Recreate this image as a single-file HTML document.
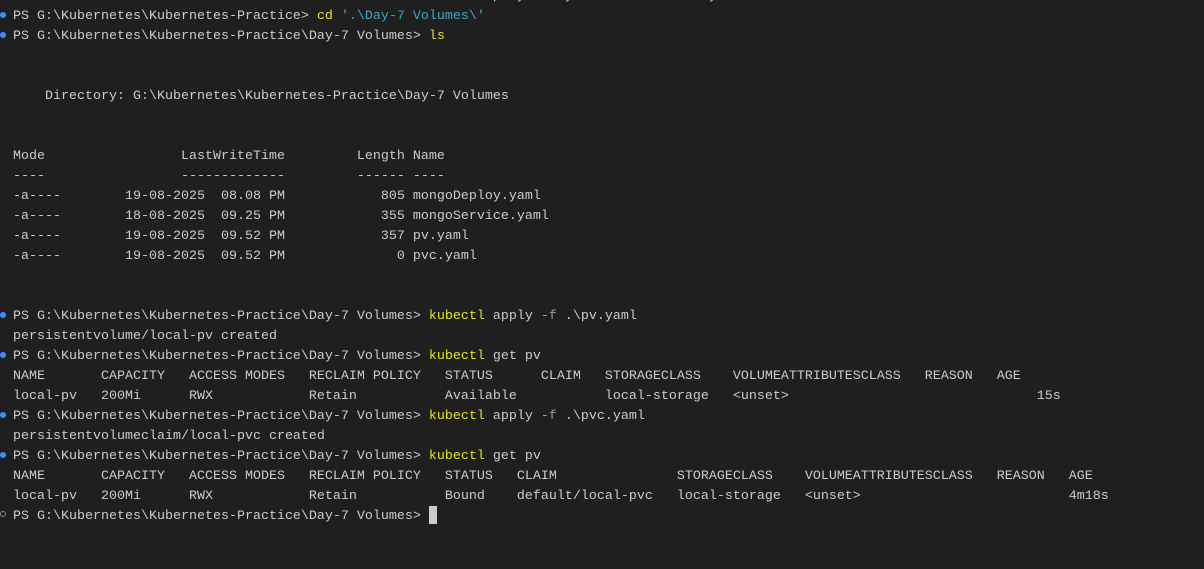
<!DOCTYPE html>
<html><head><meta charset="utf-8"><style>
html,body{margin:0;padding:0;background:#1f1f1f;width:1204px;height:569px;overflow:hidden}
.r{position:absolute;left:13px;height:20px;line-height:20px;font-family:"Liberation Mono",monospace;font-size:13.33px;color:#cccccc;white-space:pre}
.y{color:#e5e510}.s{color:#3fa7c9}.g{color:#999}
.d{position:absolute;left:0;width:6px;height:6px;border-radius:50%;background:#3794ff}
.h{position:absolute;left:0;width:4px;height:4px;border-radius:50%;border:1px solid #8a8a8a}
.cur{position:absolute;left:429px;top:506px;width:8px;height:18px;background:#cccccc}
</style></head><body>
<div class="r" style="top:-13px">PS G:\Kubernetes\Kubernetes-Practice&gt; kubectl delete -f .\deployment.yaml -f .\service.yaml</div>
<div class="d" style="top:12px"></div><div class="r" style="top:7px">PS G:\Kubernetes\Kubernetes-Practice&gt; <span class="y">cd</span> <span class="s">'.\Day-7 Volumes\'</span></div>
<div class="d" style="top:32px"></div><div class="r" style="top:27px">PS G:\Kubernetes\Kubernetes-Practice\Day-7 Volumes&gt; <span class="y">ls</span></div>
<div class="r" style="top:87px">    Directory: G:\Kubernetes\Kubernetes-Practice\Day-7 Volumes</div>
<div class="r" style="top:147px">Mode                 LastWriteTime         Length Name</div>
<div class="r" style="top:167px">----                 -------------         ------ ----</div>
<div class="r" style="top:187px">-a----        19-08-2025  08.08 PM            805 mongoDeploy.yaml</div>
<div class="r" style="top:207px">-a----        18-08-2025  09.25 PM            355 mongoService.yaml</div>
<div class="r" style="top:227px">-a----        19-08-2025  09.52 PM            357 pv.yaml</div>
<div class="r" style="top:247px">-a----        19-08-2025  09.52 PM              0 pvc.yaml</div>
<div class="d" style="top:312px"></div><div class="r" style="top:307px">PS G:\Kubernetes\Kubernetes-Practice\Day-7 Volumes&gt; <span class="y">kubectl</span> apply <span class="g">-f</span> .\pv.yaml</div>
<div class="r" style="top:327px">persistentvolume/local-pv created</div>
<div class="d" style="top:352px"></div><div class="r" style="top:347px">PS G:\Kubernetes\Kubernetes-Practice\Day-7 Volumes&gt; <span class="y">kubectl</span> get pv</div>
<div class="r" style="top:367px">NAME       CAPACITY   ACCESS MODES   RECLAIM POLICY   STATUS      CLAIM   STORAGECLASS    VOLUMEATTRIBUTESCLASS   REASON   AGE</div>
<div class="r" style="top:387px">local-pv   200Mi      RWX            Retain           Available           local-storage   &lt;unset&gt;                               15s</div>
<div class="d" style="top:412px"></div><div class="r" style="top:407px">PS G:\Kubernetes\Kubernetes-Practice\Day-7 Volumes&gt; <span class="y">kubectl</span> apply <span class="g">-f</span> .\pvc.yaml</div>
<div class="r" style="top:427px">persistentvolumeclaim/local-pvc created</div>
<div class="d" style="top:452px"></div><div class="r" style="top:447px">PS G:\Kubernetes\Kubernetes-Practice\Day-7 Volumes&gt; <span class="y">kubectl</span> get pv</div>
<div class="r" style="top:467px">NAME       CAPACITY   ACCESS MODES   RECLAIM POLICY   STATUS   CLAIM               STORAGECLASS    VOLUMEATTRIBUTESCLASS   REASON   AGE</div>
<div class="r" style="top:487px">local-pv   200Mi      RWX            Retain           Bound    default/local-pvc   local-storage   &lt;unset&gt;                          4m18s</div>
<div class="h" style="top:511px"></div><div class="r" style="top:507px">PS G:\Kubernetes\Kubernetes-Practice\Day-7 Volumes&gt; </div>
<div class="cur"></div>
</body></html>
